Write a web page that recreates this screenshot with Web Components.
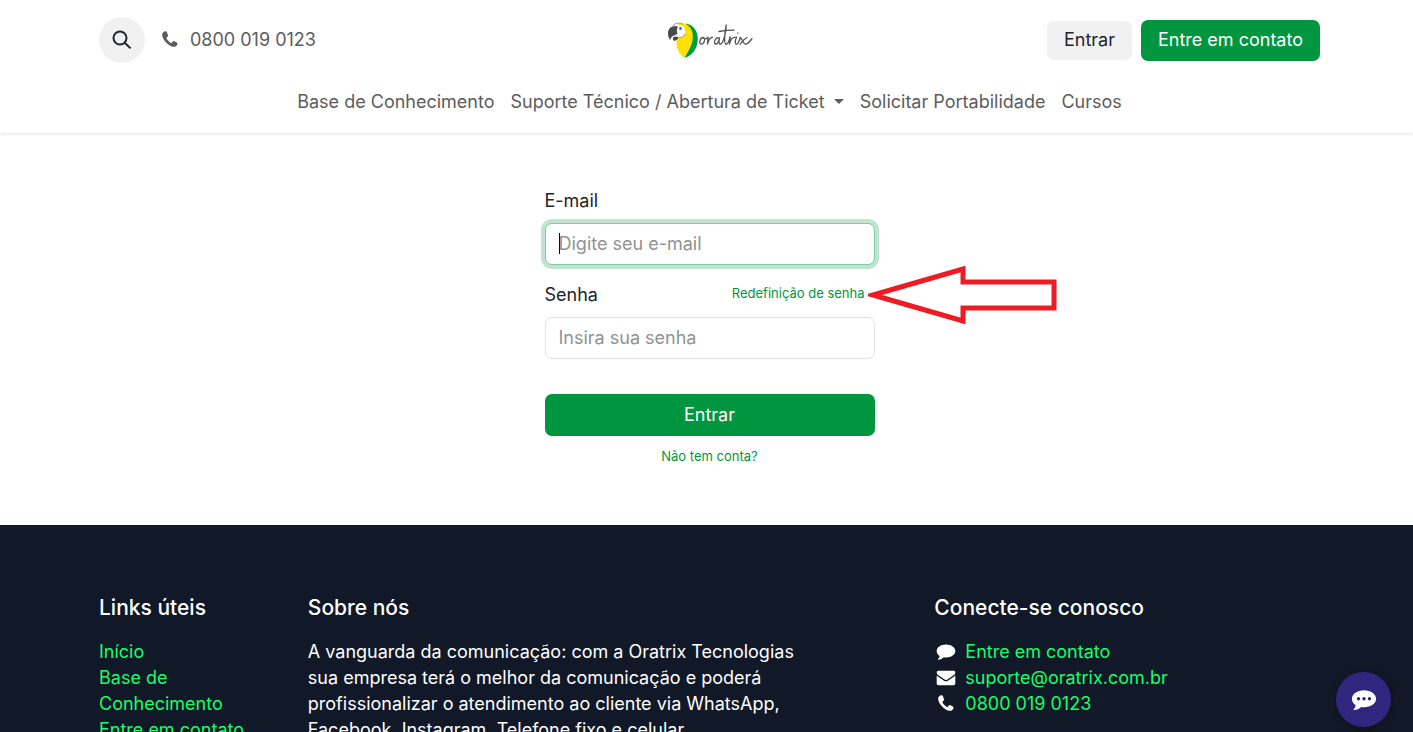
<!DOCTYPE html>
<html lang="pt-BR">
<head>
<meta charset="utf-8">
<meta name="viewport" content="width=device-width, initial-scale=1">
<title>Entrar | Oratrix</title>
<style>
    html, body {
        height: 100%;
    }

    body {
        --green: #009640;
        --ink: #212529;
        --muted: #5c5c5c;
        --light: #f1f1f1;
        --night: #111827;
        --lime: #14ff6c;
        --page-left: 99px;
        --page-right: 93px;
        margin: 0;
        overflow: hidden;
        background: #fff;
        color: var(--ink);
        font: 400 18px/26px Inter, "Liberation Sans", sans-serif;
    }
</style>
</head>
<body>

<site-header>
    <ui-icon slot="search-icon" name="search"></ui-icon>
    <nav-link href="#">Base de Conhecimento</nav-link>
    <nav-link href="#" dropdown>Suporte Técnico / Abertura de Ticket</nav-link>
    <nav-link href="#">Solicitar Portabilidade</nav-link>
    <nav-link href="#">Cursos</nav-link>
</site-header>

<main>
    <login-form></login-form>
</main>

<site-footer>
    <footer-column heading="Links úteis">
        <footer-link href="#">Início</footer-link>
        <footer-link href="#">Base de Conhecimento</footer-link>
        <footer-link href="#">Entre em contato</footer-link>
    </footer-column>
    <footer-column heading="Sobre nós">
        A vanguarda da comunicação: com a Oratrix Tecnologias sua empresa terá o melhor da comunicação e poderá profissionalizar o atendimento ao cliente via WhatsApp, Facebook, Instagram, Telefone fixo e celular.
    </footer-column>
    <footer-column heading="Conecte-se conosco">
        <footer-link href="#" icon="comment">Entre em contato</footer-link>
        <footer-link href="#" icon="envelope">suporte@oratrix.com.br</footer-link>
        <footer-link href="#" icon="phone">0800 019 0123</footer-link>
    </footer-column>
</site-footer>

<chat-button></chat-button>

<script>
const ICONS = {
    search: '<g fill="none" stroke="currentColor" stroke-width="2"><circle cx="8" cy="8" r="6.5"/><path d="M12.7 12.7 18.6 18.4"/></g>',
    phone: '<path d="M5.2 1.2C4 1.4 2.4 2.5 2.2 4.2c-.2 2.2.8 4.8 3.200 7.600 2.500 2.900 5.500 5 8.400 5 1.800 0 3-.9 3.500-2.300.2-.6.200-1.100.1-1.400-.3-.5-2.900-1.900-3.700-2.100-.8 0-1.400 1.500-2 1.900-.6.200-2.100-.8-3.300-2C7.200 9.700 6.300 8.400 6.500 7.700c.3-.6 1.700-1.200 1.700-1.900C8.100 5 7 2 6.400 1.400c-.3-.2-.7-.3-1.200-.2z" fill="currentColor"/>',
    comment: '<path d="M10 2.500c5.200 0 9.300 2.900 9.300 6.500s-4.100 6.500-9.300 6.500c-.8 0-1.500-.1-2.200-.2-1.500 1.400-3.400 2.200-5.400 2.400-.4 0-.6-.5-.3-.8.900-.8 1.400-1.700 1.500-2.900C1.900 12.800.7 11 .7 9c0-3.600 4.100-6.500 9.300-6.500z" fill="currentColor"/>',
    commenting: '<path fill-rule="evenodd" d="M10 2.500c5.200 0 9.300 2.900 9.300 6.500s-4.100 6.500-9.300 6.500c-.8 0-1.500-.1-2.200-.2-1.500 1.400-3.400 2.200-5.400 2.400-.4 0-.6-.5-.3-.8.900-.8 1.400-1.700 1.500-2.900C1.900 12.800.7 11 .7 9c0-3.600 4.100-6.500 9.300-6.500zM5.800 7.700a1.300 1.300 0 1 0 0 2.600 1.300 1.300 0 0 0 0-2.600zm4.200 0a1.300 1.300 0 1 0 0 2.600 1.300 1.300 0 0 0 0-2.600zm4.200 0a1.300 1.300 0 1 0 0 2.600 1.300 1.300 0 0 0 0-2.600z" fill="currentColor"/>',
    envelope: '<path d="M2.400 2.800h15.200c.9 0 1.700.7 1.700 1.600 0 1.300-.9 2.300-2 3.100l-5.200 3.600c-.7.500-1.400 1-2.100 1s-1.400-.5-2.100-1L2.700 7.500C1.700 6.800.7 5.600.7 4.500c0-1 .7-1.700 1.700-1.700zM.7 7.400c.3.400.7.700 1.100 1l5.200 3.600c.9.700 1.900 1.300 3 1.300s2.100-.6 3-1.300l5.200-3.600c.4-.3.800-.6 1.100-1v8.200c0 .9-.8 1.700-1.700 1.700H2.400c-.9 0-1.700-.8-1.700-1.700z" fill="currentColor"/>'
};

class UiIcon extends HTMLElement {
    constructor() {
        super();
        this.attachShadow({ mode: 'open' });
    }

    connectedCallback() {
        this.shadowRoot.innerHTML = `
        <style>
            :host { display: block; flex: none; width: 20px; height: 20px; }
            svg { display: block; width: 100%; height: 100%; }
        </style>
        <svg viewBox="0 0 20 20" aria-hidden="true">${ICONS[this.getAttribute('name')] || ''}</svg>
        `;
    }
}

class SiteLogo extends HTMLElement {
    constructor() {
        super();
        this.attachShadow({ mode: 'open' });
        this.shadowRoot.innerHTML = `
        <style>
            :host { display: block; }
            a { display: block; }
            svg { display: block; width: 90px; height: 40px; }
        </style>
        <a href="#" aria-label="Oratrix">
            <svg viewBox="-2 0 90 40" aria-hidden="true">
                <path d="M18 3.500c7 .3 13 6.500 12.800 15.500C30.600 28 26 35.500 17.500 38c3-6 7-11 7-19.500C24.500 11 22 6.500 18 3.500z" fill="#009c3c"/>
                <path d="M7 8c2.500-4.500 9-6 14-2.500 4.500 3.500 5.500 9.500 4.500 15-1.200 6.500-5.500 12-8.500 17.300-4.500-3.500-8-9.500-7.500-15.500.2-3 1.500-5.500 1-8z" fill="#ffe000"/>
                <path d="M6 8C8.500 4 14 4 16.500 7c2.500 3.500 2 8-1 10.500-2 1.200-4.500.5-5-1.500z" fill="#fff"/>
                <path d="M5.500 6C8 3 12.500 2.500 16 4.200" fill="none" stroke="#77797c" stroke-width=".8"/>
                <path d="M8 6C4 6.300 1 9 1 13c0 3 .8 5.500 2.300 7 .4-2.500 1.500-3.800 3.200-4.300L10.500 14c-.8-2.300-1-5.500.5-7.500z" fill="#484a4e"/>
                <path d="M6 17.500c1.500-1.200 4-1.500 5.500 0-.8 2-2.300 3.300-4.300 3.200-1 0-1.500-.8-1.200-3.200z" fill="#484a4e"/>
                <path d="M12 17.500c3 .2 5-1 6-3.500" fill="none" stroke="#66686a" stroke-width=".7"/>
                <circle cx="13.500" cy="8.500" r="1.900" fill="#a9bde4"/>
                <circle cx="13.500" cy="8.500" r=".9" fill="#24427d"/>
                <g fill="none" stroke="#515357" stroke-width="1.300" stroke-linecap="round" stroke-linejoin="round">
                    <path d="M36 17.500c-3 0-4.500 6.500-1.800 6.700 3.200.2 4.800-6.700 1.800-6.700 1 2 3 1.800 4.500.2M41 17l-.5 7c.8-3.500 2-6 5-6.800"/>
                    <path d="M52 18c-3.500-1.500-6 5.500-3.500 6 2 .3 3.500-3.500 4-6-.7 3.500-.6 6 .7 6.300 3.300-1 6-12 6-19.300-1.200 6-2.600 18.500-.4 19.200 1.500.3 3.200-3 4.200-6.700"/>
                    <path d="M52 11.500c4-.8 9-1.300 15-1.300M63 17l-.6 7.200c1-4 2.600-6.700 5.600-7M69.500 17c-1.800 4.500-1.500 7.200 0 7.200 1.300 0 2.500-2.500 3.500-6M70.800 13v.2M73 17.500c2 0 3 6.700 5.500 6.700 2.300 0 4.500-3 6.500-5.500M80 17.500c-3 1.500-5 4-7 7"/>
                </g>
            </svg>
        </a>
        `;
    }
}

class NavLink extends HTMLElement {
    constructor() {
        super();
        this.attachShadow({ mode: 'open' });
    }

    connectedCallback() {
        const caret = this.hasAttribute('dropdown') ? '<span class="caret"></span>' : '';
        this.shadowRoot.innerHTML = `
        <style>
            :host { display: block; }
            a { display: flex; align-items: center; gap: 9px; color: var(--muted); text-decoration: none; white-space: nowrap; }
            .caret { border: 5px solid transparent; border-top-color: currentColor; border-bottom-width: 2px; }
        </style>
        <a href="${this.getAttribute('href')}"><slot></slot>${caret}</a>
        `;
    }
}

class SiteHeader extends HTMLElement {
    constructor() {
        super();
        this.attachShadow({ mode: 'open' });
        this.shadowRoot.innerHTML = `
        <style>
            :host {
                display: block;
                padding: 17px var(--page-right) 18px var(--page-left);
                background: #fff;
                box-shadow: 0 1px 3px rgba(0, 0, 0, 0.12);
            }

            .top {
                display: grid;
                grid-template-columns: 1fr auto 1fr;
                align-items: center;
                height: 46px;
            }

            .contact, .actions {
                display: flex;
                align-items: center;
            }

            .contact { gap: 15px; }
            .actions { gap: 9px; justify-content: flex-end; }

            .search {
                display: grid;
                place-items: center;
                width: 46px;
                height: 46px;
                padding: 0;
                border: 0;
                border-radius: 50%;
                background: var(--light);
                color: var(--ink);
            }

            .phone {
                display: flex;
                align-items: center;
                gap: 10px;
                color: var(--muted);
            }

            .actions button {
                height: 39px;
                padding: 0 17px;
                border: 0;
                border-radius: 7px;
                background: var(--light);
                color: var(--ink);
                font: inherit;
            }

            .actions .primary {
                height: 41px;
                background: var(--green);
                color: #fff;
            }

            nav {
                display: flex;
                justify-content: center;
                gap: 16px;
                margin-top: 26px;
            }
        </style>
        <div class="top">
            <div class="contact">
                <button class="search" aria-label="Pesquisar"><slot name="search-icon"></slot></button>
                <div class="phone"><ui-icon name="phone"></ui-icon><span>0800 019 0123</span></div>
            </div>
            <site-logo></site-logo>
            <div class="actions">
                <button>Entrar</button>
                <button class="primary">Entre em contato</button>
            </div>
        </div>
        <nav><slot></slot></nav>
        `;
    }
}

class CalloutArrow extends HTMLElement {
    constructor() {
        super();
        this.attachShadow({ mode: 'open' });
        this.shadowRoot.innerHTML = `
        <style>
            :host { display: block; pointer-events: none; }
            svg { display: block; width: 190px; height: 58px; }
        </style>
        <svg viewBox="0 0 190 58" aria-hidden="true">
            <path d="M5 29 95 3v13h91v26H95v13z" fill="none" stroke="#ed1c24" stroke-width="5"/>
        </svg>
        `;
    }
}

class LoginForm extends HTMLElement {
    constructor() {
        super();
        this.attachShadow({ mode: 'open' });
        this.shadowRoot.innerHTML = `
        <style>
            :host {
                display: flex;
                justify-content: center;
                padding: 55px var(--page-right) 58px var(--page-left);
            }

            form { width: 330px; }

            label { display: block; }

            .row {
                position: relative;
                display: flex;
                justify-content: space-between;
                align-items: flex-start;
                padding-right: 10px;
            }

            callout-arrow {
                position: absolute;
                left: 323px;
                top: -16px;
            }

            input {
                display: block;
                box-sizing: border-box;
                width: 100%;
                height: 42px;
                margin: 9px 0 17px;
                padding: 0 13px 2px;
                border: 1px solid #dee2e6;
                border-radius: 7px;
                outline: 0;
                background: #fff;
                color: var(--ink);
                font: inherit;
            }

            input::placeholder { color: #909294; }

            input:focus {
                border-color: #80cb9f;
                box-shadow: 0 0 0 4px rgba(0, 150, 64, 0.25);
            }

            /* steady text cursor while the field is empty */
            input:focus:placeholder-shown {
                background: linear-gradient(#000, #000) 13px 9px / 1px 21px no-repeat #fff;
                caret-color: transparent;
            }

            button {
                display: block;
                width: 100%;
                height: 42px;
                margin-top: 35px;
                border: 0;
                border-radius: 7px;
                background: var(--green);
                color: #fff;
                font: inherit;
            }

            a {
                color: var(--green);
                font-size: 13px;
                line-height: 22px;
                text-decoration: none;
            }

            .signup { margin-top: 9px; text-align: center; }
            .signup a { display: block; }
        </style>
        <form>
            <label for="email">E-mail</label>
            <input id="email" type="email" placeholder="Digite seu e-mail" autofocus>
            <div class="row">
                <label for="password">Senha</label>
                <a href="#">Redefinição de senha</a>
                <callout-arrow></callout-arrow>
            </div>
            <input id="password" type="password" placeholder="Insira sua senha">
            <button type="button">Entrar</button>
            <div class="signup"><a href="#">Não tem conta?</a></div>
        </form>
        `;
    }

    connectedCallback() {
        this.shadowRoot.querySelector('#email').focus();
    }
}

class FooterLink extends HTMLElement {
    constructor() {
        super();
        this.attachShadow({ mode: 'open' });
    }

    connectedCallback() {
        const icon = this.getAttribute('icon');
        this.shadowRoot.innerHTML = `
        <style>
            :host { display: flex; align-items: center; gap: 9px; }
            ui-icon { margin-left: 2px; }
            a { color: var(--lime); text-decoration: none; }
        </style>
        ${icon ? `<ui-icon name="${icon}"></ui-icon>` : ''}
        <a href="${this.getAttribute('href')}"><slot></slot></a>
        `;
    }
}

class FooterColumn extends HTMLElement {
    constructor() {
        super();
        this.attachShadow({ mode: 'open' });
    }

    connectedCallback() {
        this.shadowRoot.innerHTML = `
        <style>
            :host { display: block; }
            h2 { margin: 0 0 18px; font-size: 21px; line-height: 26px; font-weight: 500; }
        </style>
        <h2>${this.getAttribute('heading')}</h2>
        <slot></slot>
        `;
    }
}

class SiteFooter extends HTMLElement {
    constructor() {
        super();
        this.attachShadow({ mode: 'open' });
        this.shadowRoot.innerHTML = `
        <style>
            :host {
                display: grid;
                grid-template-columns: 2fr 5fr 1fr 4fr;
                padding: 70px calc(var(--page-right) - 16px) 70px calc(var(--page-left) - 16px);
                background: var(--night);
                color: #fff;
            }

            ::slotted(*) { padding: 0 16px; }
            ::slotted(:last-child) { grid-column: 4; }
        </style>
        <slot></slot>
        `;
    }
}

class ChatButton extends HTMLElement {
    constructor() {
        super();
        this.attachShadow({ mode: 'open' });
        this.shadowRoot.innerHTML = `
        <style>
            :host { position: fixed; right: 22px; bottom: 5px; }

            button {
                display: grid;
                place-items: center;
                width: 55px;
                height: 55px;
                padding: 0;
                border: 0;
                border-radius: 50%;
                background: #30257f;
                box-shadow: 0 2px 8px rgba(0, 0, 0, 0.3);
                color: #fff;
            }

            ui-icon { width: 26px; height: 26px; }
        </style>
        <button aria-label="Abrir chat"><ui-icon name="commenting"></ui-icon></button>
        `;
    }
}

customElements.define('ui-icon', UiIcon);
customElements.define('site-logo', SiteLogo);
customElements.define('nav-link', NavLink);
customElements.define('site-header', SiteHeader);
customElements.define('callout-arrow', CalloutArrow);
customElements.define('login-form', LoginForm);
customElements.define('footer-link', FooterLink);
customElements.define('footer-column', FooterColumn);
customElements.define('site-footer', SiteFooter);
customElements.define('chat-button', ChatButton);
</script>
</body>
</html>
